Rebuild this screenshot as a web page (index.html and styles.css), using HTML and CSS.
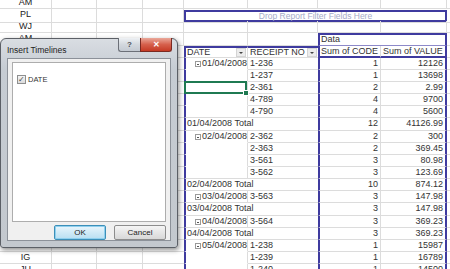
FILE: index.html
```html
<!DOCTYPE html>
<html>
<head>
<meta charset="utf-8">
<link rel="stylesheet" href="styles.css">
</head>
<body>
<div class="sheet">
  <div class="row"><div class="c a">AM</div><div class="c"></div><div class="c"></div><div class="c"></div><div class="c"></div><div class="c"></div><div class="c"></div><div class="c"></div><div class="c"></div></div>
  <div class="row"><div class="c a">PL</div><div class="c"></div><div class="c"></div><div class="c"></div><div class="c span4"><div class="filter">Drop Report Filter Fields Here</div></div><div class="c"></div></div>
  <div class="row"><div class="c a">WJ</div><div class="c"></div><div class="c"></div><div class="c"></div><div class="c"></div><div class="c"></div><div class="c"></div><div class="c"></div><div class="c"></div></div>
  <div class="row"><div class="c a">AM</div><div class="c"></div><div class="c"></div><div class="c"></div><div class="c"></div><div class="c nr"></div><div class="c span2 datahd">Data</div><div class="c"></div></div>
  <div class="row"><div class="c a"></div><div class="c"></div><div class="c"></div><div class="c nr"></div><div class="c pl pt hd">DATE<span class="dd"></span></div><div class="c nr pt hd">RECEIPT NO<span class="dd"></span></div><div class="c pg pb">Sum of CODE</div><div class="c pr pb">Sum of VALUE</div><div class="c"></div></div>

  <div class="row"><div class="c a"></div><div class="c"></div><div class="c"></div><div class="c nr"></div><div class="c pl nb grp"><span class="mn"></span>01/04/2008</div><div class="c nr">1-236</div><div class="c pg num">1</div><div class="c pr num">12126</div><div class="c"></div></div>
  <div class="row"><div class="c a"></div><div class="c"></div><div class="c"></div><div class="c nr"></div><div class="c pl nb"></div><div class="c nr">1-237</div><div class="c pg num">1</div><div class="c pr num">13698</div><div class="c"></div></div>
  <div class="row"><div class="c a"></div><div class="c"></div><div class="c"></div><div class="c nr"></div><div class="c pl nb sel"></div><div class="c nr">2-361</div><div class="c pg num">2</div><div class="c pr num">2.99</div><div class="c"></div></div>
  <div class="row"><div class="c a"></div><div class="c"></div><div class="c"></div><div class="c nr"></div><div class="c pl nb"></div><div class="c nr">4-789</div><div class="c pg num">4</div><div class="c pr num">9700</div><div class="c"></div></div>
  <div class="row"><div class="c a"></div><div class="c"></div><div class="c"></div><div class="c nr"></div><div class="c pl"></div><div class="c nr">4-790</div><div class="c pg num">4</div><div class="c pr num">5600</div><div class="c"></div></div>
  <div class="row"><div class="c a"></div><div class="c"></div><div class="c"></div><div class="c nr"></div><div class="c pl nr span2 tot">01/04/2008 Total</div><div class="c pg num">12</div><div class="c pr num">41126.99</div><div class="c"></div></div>

  <div class="row"><div class="c a"></div><div class="c"></div><div class="c"></div><div class="c nr"></div><div class="c pl nb grp"><span class="mn"></span>02/04/2008</div><div class="c nr">2-362</div><div class="c pg num">2</div><div class="c pr num">300</div><div class="c"></div></div>
  <div class="row"><div class="c a"></div><div class="c"></div><div class="c"></div><div class="c nr"></div><div class="c pl nb"></div><div class="c nr">2-363</div><div class="c pg num">2</div><div class="c pr num">369.45</div><div class="c"></div></div>
  <div class="row"><div class="c a"></div><div class="c"></div><div class="c"></div><div class="c nr"></div><div class="c pl nb"></div><div class="c nr">3-561</div><div class="c pg num">3</div><div class="c pr num">80.98</div><div class="c"></div></div>
  <div class="row"><div class="c a"></div><div class="c"></div><div class="c"></div><div class="c nr"></div><div class="c pl"></div><div class="c nr">3-562</div><div class="c pg num">3</div><div class="c pr num">123.69</div><div class="c"></div></div>
  <div class="row"><div class="c a"></div><div class="c"></div><div class="c"></div><div class="c nr"></div><div class="c pl nr span2 tot">02/04/2008 Total</div><div class="c pg num">10</div><div class="c pr num">874.12</div><div class="c"></div></div>

  <div class="row"><div class="c a"></div><div class="c"></div><div class="c"></div><div class="c nr"></div><div class="c pl grp"><span class="mn"></span>03/04/2008</div><div class="c nr">3-563</div><div class="c pg num">3</div><div class="c pr num">147.98</div><div class="c"></div></div>
  <div class="row"><div class="c a"></div><div class="c"></div><div class="c"></div><div class="c nr"></div><div class="c pl nr span2 tot">03/04/2008 Total</div><div class="c pg num">3</div><div class="c pr num">147.98</div><div class="c"></div></div>

  <div class="row"><div class="c a"></div><div class="c"></div><div class="c"></div><div class="c nr"></div><div class="c pl grp"><span class="mn"></span>04/04/2008</div><div class="c nr">3-564</div><div class="c pg num">3</div><div class="c pr num">369.23</div><div class="c"></div></div>
  <div class="row"><div class="c a"></div><div class="c"></div><div class="c"></div><div class="c nr"></div><div class="c pl nr span2 tot">04/04/2008 Total</div><div class="c pg num">3</div><div class="c pr num">369.23</div><div class="c"></div></div>

  <div class="row"><div class="c a"></div><div class="c"></div><div class="c"></div><div class="c nr"></div><div class="c pl nb grp"><span class="mn"></span>05/04/2008</div><div class="c nr">1-238</div><div class="c pg num">1</div><div class="c pr num">15987</div><div class="c"></div></div>
  <div class="row"><div class="c a">IG</div><div class="c"></div><div class="c"></div><div class="c nr"></div><div class="c pl nb"></div><div class="c nr">1-239</div><div class="c pg num">1</div><div class="c pr num">16789</div><div class="c"></div></div>
  <div class="row"><div class="c a">JU</div><div class="c"></div><div class="c"></div><div class="c nr"></div><div class="c pl nb"></div><div class="c nr">1-240</div><div class="c pg num">1</div><div class="c pr num">14500</div><div class="c"></div></div>
</div>

<div class="dialog">
  <div class="titlebar">
    <span class="title">Insert Timelines</span>
    <div class="capbtns"><span class="help">?</span><span class="close">&#x2715;</span></div>
  </div>
  <div class="client">
    <div class="list">
      <div class="item"><span class="chk">&#x2713;</span>DATE</div>
    </div>
    <div class="buttons"><span class="btn ok">OK</span><span class="btn">Cancel</span></div>
  </div>
</div>
</body>
</html>
```
FILE: styles.css
```css
* { box-sizing: border-box; margin: 0; padding: 0; }
html, body { width: 450px; height: 269px; overflow: hidden; background: #fff; }
body {
  font-family: "Liberation Sans", Arial, sans-serif;
  font-size: 9px;
  color: #333;
  position: relative;
}
.sheet { margin-top: -3px; }
.row {
  display: grid;
  grid-template-columns: 52px 45px 46px 41px 64px 70px 63px 66px 3px;
  height: 12.15px;
}
.c {
  border-right: 1px solid #dcdcdc;
  border-bottom: 1px solid #dcdcdc;
  line-height: 11px;
  padding: 0 2px;
  white-space: nowrap;
  position: relative;
}
.a { text-align: center; color: #222; }
.span4 { grid-column: span 4; padding: 0; border-right: 0; }
.span2 { grid-column: span 2; }
.filter {
  margin: 1px 0 0 0;
  height: 12px;
  border: 2px solid #3f3b9f;
  color: #a6acc8;
  font-size: 8.5px;
  line-height: 8px;
  text-align: center;
}
.datahd {
  border-top: 2px solid #3f3b9f;
  border-left: 2px solid #3f3b9f;
  border-right: 2px solid #3f3b9f;
  border-bottom: 1px solid #8d89c9;
  line-height: 9px;
  padding-left: 1px;
}
.nr { border-right: 0; }
.nb { border-bottom-color: transparent; }
.pl { border-left: 2px solid #3f3b9f; padding-left: 1px; }
.pg { border-left: 2px solid #3f3b9f; }
.pr { border-right: 2px solid #3f3b9f; }
.pt { border-top: 2px solid #3f3b9f; line-height: 9px; }
.pb { border-bottom: 2px solid #3f3b9f; line-height: 10px; }
.pg.pb { padding-left: 1px; }
.hd { display: flex; justify-content: space-between; align-items: flex-start; padding-right: 1px; }
.dd {
  width: 10px; height: 9px;
  background: #ececec;
  border: 1px solid #d4d4d4;
  position: relative;
}
.dd::after {
  content: "";
  position: absolute;
  left: 2px; top: 3px;
  border-left: 2px solid transparent;
  border-right: 2px solid transparent;
  border-top: 2px solid #444;
}
.num { text-align: right; padding-right: 2px; }
.tot { padding-left: 1px; }
.grp { padding-left: 9px; display: flex; align-items: flex-start; }
.mn {
  width: 6px; height: 6px;
  border: 1px solid #9a9a9a;
  margin: 3px 1px 0 0;
  position: relative;
  flex: none;
}
.mn::after {
  content: "";
  position: absolute;
  left: 1px; top: 2px;
  width: 2px; height: 1px;
  background: #555;
}
.sel::after {
  content: "";
  position: absolute;
  left: -2px; top: -1px; right: 0; bottom: -1px;
  border: 2px solid #1f7a52;
}
.sel::before {
  content: "";
  position: absolute;
  right: -2px; bottom: -3px;
  width: 4px; height: 4px;
  background: #1f7a52;
  border: 1px solid #fff;
  z-index: 2;
}

/* dialog */
.dialog {
  position: absolute;
  left: 0; top: 38px;
  width: 178px; height: 210px;
  padding: 0 6px 8px 6px;
  border: 1px solid #5b5f66;
  border-radius: 6px 6px 3px 3px;
  background: linear-gradient(#d9dde2, #c6ccd3 30px, #c3c8ce);
  box-shadow: 1px 2px 5px rgba(0,0,0,0.45);
  display: flex;
  flex-direction: column;
  color: #1b1b1b;
}
.titlebar {
  height: 19px;
  display: flex;
  justify-content: space-between;
  align-items: flex-start;
  flex: none;
}
.title { font-size: 8.5px; padding-top: 6px; color: #222; }
.capbtns { display: flex; margin-right: -1px; margin-top: -1px; }
.help, .close {
  height: 14px;
  display: flex; align-items: center; justify-content: center;
  border: 1px solid #6c7078;
  border-top: 0;
}
.help {
  width: 22px;
  border-radius: 0 0 0 3px;
  background: linear-gradient(#eef1f4, #d3d8de 50%, #c4cad2);
  color: #4b4f56; font-size: 8px; font-weight: bold;
  border-right: 0;
}
.close {
  width: 32px;
  border-radius: 0 0 3px 0;
  border-color: #7a2a22;
  background: linear-gradient(#eaa89a, #d6604c 50%, #c53a25);
  color: #fff; font-size: 8px; font-weight: bold;
}
.client {
  flex: 1;
  background: #f0f0f0;
  border: 1px solid #8c9199;
  display: flex;
  flex-direction: column;
  padding: 3px 4px 0 4px;
}
.list {
  height: 160px;
  background: #fff;
  border: 1px solid #adadad;
  padding: 12px 0 0 4px;
}
.item { display: flex; align-items: center; font-size: 7.5px; color: #333; gap: 2px; }
.chk {
  width: 9px; height: 9px;
  border: 1px solid #8e8f8f;
  background: linear-gradient(#f4f4f4, #dcdcdc);
  font-size: 8px; line-height: 7px; text-align: center;
  color: #4a4a4a;
}
.buttons {
  display: flex;
  justify-content: flex-end;
  gap: 8px;
  margin-top: 3px;
}
.btn {
  width: 52px; height: 15px;
  border: 1px solid #8d8d8d;
  border-radius: 2px;
  background: linear-gradient(#f5f5f5, #e6e6e6 50%, #d8d8d8);
  font-size: 8px;
  display: flex; align-items: center; justify-content: center;
  color: #222;
}
.btn.ok {
  border-color: #3c8fb8;
  background: linear-gradient(#eaf6fc, #d0eaf7 50%, #b9dff2);
  box-shadow: inset 0 0 0 1px #8fd0ef;
}
```
